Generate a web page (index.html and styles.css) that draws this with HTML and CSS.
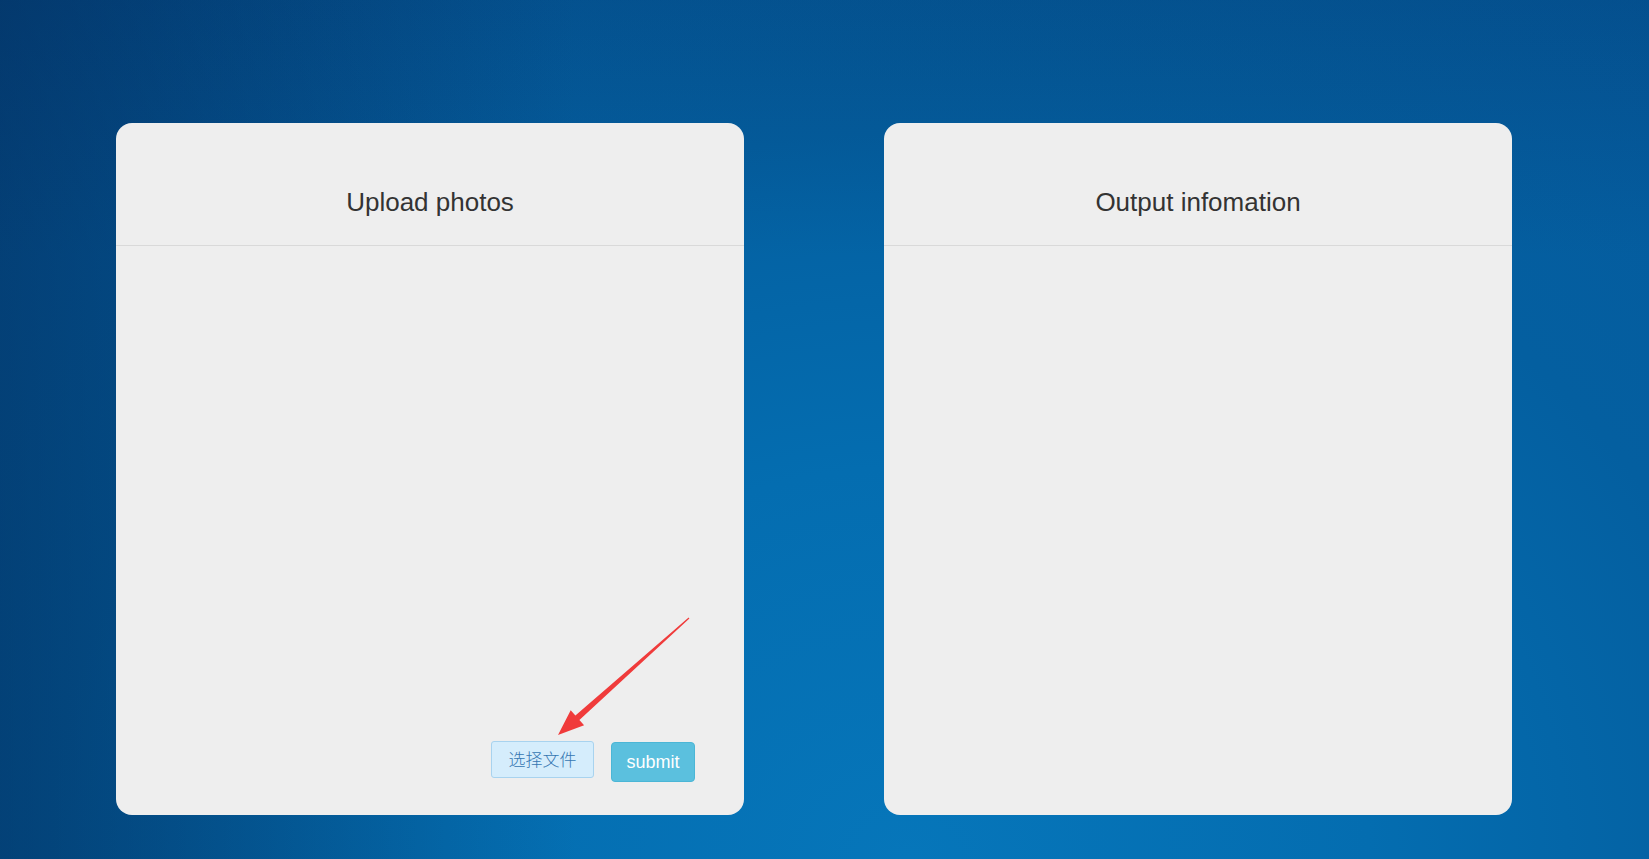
FILE: index.html
```html
<!DOCTYPE html>
<html lang="en">
<head>
<meta charset="utf-8">
<title>Upload</title>
<link rel="stylesheet" href="styles.css">
</head>
<body>
<main class="page">
  <section class="card">
    <header class="card-header"><h2 class="card-title">Upload photos</h2></header>
    <div class="card-body">
      <div class="actions">
        <label class="file-btn">选择文件</label>
        <button class="submit-btn" type="button">submit</button>
      </div>
    </div>
    <svg class="annot" width="628" height="692" viewBox="0 0 628 692" aria-hidden="true">
      <polygon fill="#f03b3b" points="573.4,495.5 463.4,596.9 468.1,602.2 442,612 454.7,587.2 459.4,592.5 572.6,494.5"/>
    </svg>
  </section>
  <section class="card">
    <header class="card-header"><h2 class="card-title">Output infomation</h2></header>
    <div class="card-body"></div>
  </section>
</main>
</body>
</html>
```
FILE: styles.css
```css
html, body {
  margin: 0;
  padding: 0;
  height: 100%;
}
body {
  font-family: "Liberation Sans", Arial, "Noto Sans CJK SC", sans-serif;
  background:
    linear-gradient(to right, rgba(2, 30, 70, 0.45) 0%, rgba(2, 30, 70, 0) 35%),
    linear-gradient(to bottom, rgba(2, 30, 70, 0.18) 0%, rgba(2, 30, 70, 0) 30%),
    radial-gradient(ellipse 80% 130% at 55% 100%, #0676ba 0%, #046db0 35%, #045fa0 65%, #055a9e 100%);
  background-color: #045fa0;
  overflow: hidden;
}
.page {
  display: flex;
  gap: 140px;
  padding: 123px 0 0 116px;
}
.card {
  position: relative;
  width: 628px;
  height: 692px;
  background: #eeeeee;
  border-radius: 16px;
  display: flex;
  flex-direction: column;
}
.card-header {
  padding: 64px 0 28px;
  border-bottom: 1px solid #d9d9d9;
  text-align: center;
}
.card-title {
  margin: 0;
  font-size: 26px;
  line-height: 30px;
  font-weight: normal;
  color: #333333;
}
.card-body {
  flex: 1;
  display: flex;
  flex-direction: column;
  justify-content: flex-end;
  padding: 0 49px 33px 0;
}
.actions {
  display: flex;
  justify-content: flex-end;
  align-items: flex-end;
  gap: 17px;
}
.file-btn {
  box-sizing: border-box;
  width: 103px;
  height: 37px;
  margin-bottom: 4px;
  display: flex;
  align-items: center;
  justify-content: center;
  background: #d5edfc;
  border: 1px solid #a8d3ef;
  border-radius: 3px;
  color: #3677b2;
  font-family: "Noto Sans CJK SC", sans-serif;
  font-size: 17px;
  font-weight: 300;
  padding-bottom: 2px;
}
.submit-btn {
  box-sizing: border-box;
  width: 84px;
  height: 40px;
  background: #5bc0de;
  border: 1px solid #4bb6d6;
  border-radius: 4px;
  color: #ffffff;
  font-family: "Liberation Sans", Arial, sans-serif;
  font-size: 18px;
  padding: 0;
}
.annot {
  position: absolute;
  left: 0;
  top: 0;
  pointer-events: none;
}
```
